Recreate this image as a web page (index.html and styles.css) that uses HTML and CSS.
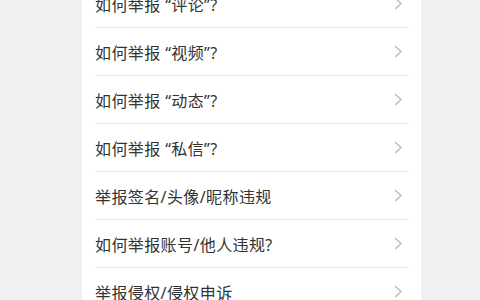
FILE: index.html
```html
<!DOCTYPE html>
<html lang="zh-CN">
<head>
    <meta charset="UTF-8">
    <meta name="viewport" content="width=device-width, initial-scale=1.0">
    <title>举报帮助</title>
    <link rel="stylesheet" href="styles.css">
</head>
<body>
    <div class="lista">
        <div class="linha"><div class="item"><span>如何举报 “评论”?</span>
            <svg class="seta" width="8" height="13" viewBox="0 0 8 13"><polyline points="1,1 7,6.5 1,12"/></svg></div></div>
        <div class="linha"><div class="item"><span>如何举报 “视频”?</span>
            <svg class="seta" width="8" height="13" viewBox="0 0 8 13"><polyline points="1,1 7,6.5 1,12"/></svg></div></div>
        <div class="linha"><div class="item"><span>如何举报 “动态”?</span>
            <svg class="seta" width="8" height="13" viewBox="0 0 8 13"><polyline points="1,1 7,6.5 1,12"/></svg></div></div>
        <div class="linha"><div class="item"><span>如何举报 “私信”?</span>
            <svg class="seta" width="8" height="13" viewBox="0 0 8 13"><polyline points="1,1 7,6.5 1,12"/></svg></div></div>
        <div class="linha"><div class="item"><span>举报签名/头像/昵称违规</span>
            <svg class="seta" width="8" height="13" viewBox="0 0 8 13"><polyline points="1,1 7,6.5 1,12"/></svg></div></div>
        <div class="linha"><div class="item"><span>如何举报账号/他人违规?</span>
            <svg class="seta" width="8" height="13" viewBox="0 0 8 13"><polyline points="1,1 7,6.5 1,12"/></svg></div></div>
        <div class="linha"><div class="item"><span>举报侵权/侵权申诉</span>
            <svg class="seta" width="8" height="13" viewBox="0 0 8 13"><polyline points="1,1 7,6.5 1,12"/></svg></div></div>
    </div>
</body>
</html>
```

FILE: styles.css
```css
body {
    margin: 0;
    height: 300px;
    overflow: hidden;
    background-color: #f0f0f3;
    font-family: "Noto Sans", "Noto Sans CJK SC", sans-serif;
}
.lista {
    margin: -20px 0 0 82px;
    width: 339px;
    background-color: #fff;
}
.linha {
    padding-left: 13px;
}
.item {
    display: flex;
    align-items: center;
    justify-content: space-between;
    height: 47px;
    margin-right: 12px;
    padding-right: 7px;
    border-bottom: 1px solid #ececec;
    font-size: 16px;
    letter-spacing: 0.4px;
    color: #333;
}
.seta polyline {
    fill: none;
    stroke: #b8b8b8;
    stroke-width: 1.4;
}
```
